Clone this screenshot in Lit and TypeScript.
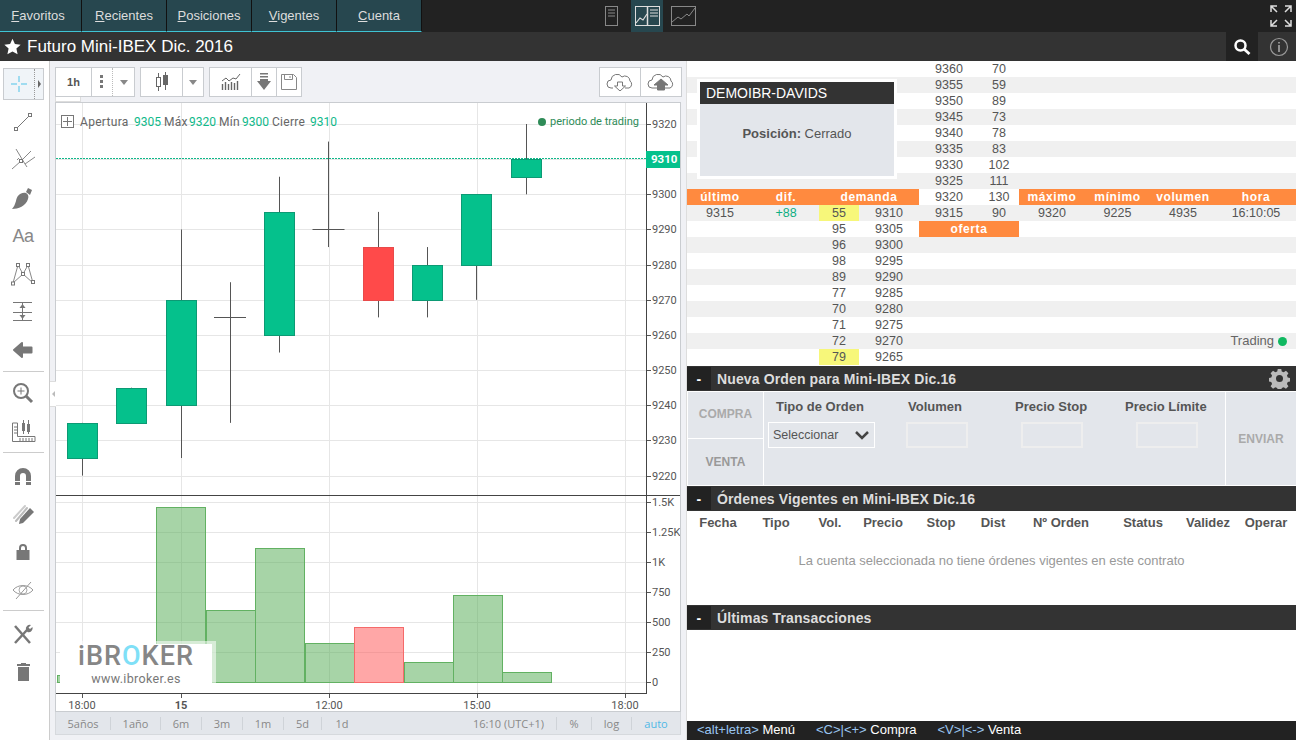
import { LitElement, html, css, svg } from "lit";
import { customElement } from "lit/decorators.js";

const Y = (p: number) => 124 + (9320 - p) * 3.516;
type C = [number, number, number, number, number];
const candles: C[] = [
  [82, 9235, 9225, 9235, 9220],
  [131.5, 9245, 9235, 9245, 9235],
  [181, 9270, 9240, 9290, 9225],
  [230, 9265, 9265, 9275, 9235],
  [279.5, 9295, 9260, 9305, 9255],
  [328.5, 9290, 9290, 9315, 9285],
  [378, 9285, 9270, 9295, 9265],
  [427.5, 9280, 9270, 9285, 9265],
  [476.5, 9300, 9280, 9300, 9270],
  [526, 9310, 9305, 9320, 9300],
];
const vols: [number, number, boolean][] = [
  [57, 675, false], [107, 660, false],
  [156, 507, false], [206, 610, false], [255, 548, false], [305, 643, false],
  [354, 627, true], [404, 662, false], [453, 595, false], [502, 672, false],
];
const priceTicks = [9320, 9310, 9300, 9290, 9280, 9270, 9260, 9250, 9240, 9230, 9220];
const volTicks: [string, number][] = [["1.5K", 502], ["1.25K", 532], ["1K", 562], ["750", 592], ["500", 622], ["250", 652], ["0", 682]];
const vgrid = [82, 181, 329, 477, 625];
const times: [string, number, boolean][] = [["18:00", 82, false], ["15", 181, true], ["12:00", 329, false], ["15:00", 477, false], ["18:00", 625, false]];

@customElement("chart-canvas")
class ChartCanvas extends LitElement {
  static styles = css`
    :host { display: block; width: 629px; height: 611px; }
    svg { display: block; }
    text { font-family: Roboto, "Liberation Sans", sans-serif; font-size: 12px; letter-spacing: .3px; fill: #555; }
    .lab { fill: #666; }
    .val { fill: #0fb98a; letter-spacing: 0; }
    .tr { fill: #2e8b57; font-size: 11px; letter-spacing: 0; }
    .ax { fill: #555; font-size: 11px; letter-spacing: 0; }
    .cur { fill: #fff; font-weight: 700; font-size: 11.5px; letter-spacing: 0; }
    .b { font-weight: 700; }
  `;
  render() {
    return html`<svg width="629" height="611" viewBox="55 102 629 611">
      <rect x="55" y="102" width="629" height="611" fill="#fff"/>
      ${svg`
      ${vgrid.map((x) => svg`<line x1=${x + .5} x2=${x + .5} y1="103" y2="693" stroke="#e6e6e6"/>`)}
      ${priceTicks.map((p) => svg`<line x1="56" x2="646" y1=${Math.round(Y(p)) + .5} y2=${Math.round(Y(p)) + .5} stroke="#e6e6e6"/>`)}
      ${volTicks.map(([, y]) => svg`<line x1="56" x2="646" y1=${y + .5} y2=${y + .5} stroke="#e6e6e6"/>`)}
      <line x1="56" x2="646" y1="158.5" y2="158.5" stroke="#0fb98a" stroke-dasharray="2 1"/>
      ${candles.map(([x, o, c, h, l]) => {
        const wick = svg`<line x1=${Math.floor(x) + .5} x2=${Math.floor(x) + .5} y1=${Y(h)} y2=${Y(l)} stroke="#555"/>`;
        if (o === c) return svg`${wick}<line x1=${x - 16} x2=${x + 16} y1=${Math.round(Y(o)) + .5} y2=${Math.round(Y(o)) + .5} stroke="#555"/>`;
        const red = x === 378;
        return svg`${wick}<rect x=${Math.floor(x) - 14.5} y=${Math.round(Y(o)) + .5} width="30" height=${Math.round(Y(c)) - Math.round(Y(o))} fill=${red ? "#ff4a4a" : "#05c18c"} stroke=${red ? "#e84a4a" : "#0c9a74"}/>`;
      })}
      ${vols.map(([x, top, red]) => svg`<rect x=${x + .5} y=${top + .5} width="49" height=${682 - top} fill=${red ? "rgba(255,80,80,.5)" : "rgba(80,170,80,.5)"} stroke=${red ? "#f56a6a" : "#62b162"}/>`)}
      <line x1="646.5" x2="646.5" y1="103" y2="693" stroke="#444"/>
      <line x1="55" x2="684" y1="495.5" y2="495.5" stroke="#444"/>
      <line x1="55" x2="647" y1="693.500" y2="693.500" stroke="#444"/>
      ${priceTicks.map((p) => svg`<line x1="647" x2="651" y1=${Math.round(Y(p)) + .5} y2=${Math.round(Y(p)) + .5} stroke="#555"/>
        <text class="ax" x="652" y=${Math.round(Y(p)) + 4}>${p}</text>`)}
      <rect x="646" y="151" width="35" height="17" fill="#05c18c"/>
      <text class="cur" x="651" y="163">9310</text>
      ${volTicks.map(([t, y]) => svg`<line x1="647" x2="651" y1=${y + .5} y2=${y + .5} stroke="#555"/>
        <text class="ax" x="652" y=${y + 4}>${t}</text>`)}
      ${times.map(([t, x, b]) => svg`<line x1=${x + .5} x2=${x + .5} y1="694" y2="698" stroke="#555"/>
        <text class=${b ? "ax b" : "ax"} x=${x} y="708.500" text-anchor="middle">${t}</text>`)}
      <rect x="61.500" y="115.500" width="12" height="12" fill="#fff" stroke="#777"/>
      <path d="M67.500 117v9M63 121.500h9" stroke="#777"/>
      <text class="lab" x="80" y="125.500">Apertura</text><text class="val" x="134" y="125.500">9305</text>
      <text class="lab" x="164" y="125.500">Máx</text><text class="val" x="189" y="125.500">9320</text>
      <text class="lab" x="219" y="125.500">Mín</text><text class="val" x="242" y="125.500">9300</text>
      <text class="lab" x="272" y="125.500">Cierre</text><text class="val" x="310" y="125.500">9310</text>
      <circle cx="542" cy="122" r="4" fill="#2e8b57"/>
      <text class="tr" x="550" y="125">periodo de trading</text>
      `}
    </svg>`;
  }
}

const ic = {
  cross: svg`<path d="M12 4v6M12 14v6M4 12h6M14 12h6" stroke="#4fc3e8" stroke-width="1" fill="none"/>`,
  line: svg`<path d="M6.500 17.500L17.500 6.500" stroke="#777" fill="none"/><rect x="3.500" y="17.500" width="3" height="3" fill="#fff" stroke="#777"/><rect x="17.500" y="3.500" width="3" height="3" fill="#fff" stroke="#777"/>`,
  pitch: svg`<path d="M1 21L10 13M5 1l9 15 10-7M10 13l10-10M14 16l2 3M8 10l-2 2" stroke="#888" fill="none"/><rect x="8.500" y="11.500" width="3" height="3" fill="#fff" stroke="#777"/>`,
  brush: svg`<path d="M1 23C7 23 15 20 17 13c1-3 0-5-2-6C9 6 6 10 5 15c-1 3-2 6-4 8zM15 6l2-4 4 2-2 5z" fill="#777"/>`,
  nodes: svg`<path d="M2 21L7 3l5 9 5-9 5 18M2 21l10-9 10 9" stroke="#888" fill="none"/><g fill="#fff" stroke="#777"><rect x=".5" y="20" width="3" height="3"/><rect x="5.500" y="1.500" width="3" height="3"/><rect x="10.500" y="10.500" width="3" height="3"/><rect x="15.500" y="1.500" width="3" height="3"/><rect x="20.500" y="18.500" width="3" height="3"/></g>`,
  measure: svg`<path d="M2 2.500h19M2 12.500h19M2 20.500h19" stroke="#777" fill="none"/><path d="M11.500 3v17" stroke="#777"/><path d="M11.500 4l-3 4h6zM11.500 19l-3-4h6z" fill="#777"/>`,
  back: svg`<path d="M3 12l8-7v4.500h9.500v5H11V19z" fill="#777" stroke="#777" stroke-width="2" stroke-linejoin="round"/>`,
  zoom: svg`<circle cx="10" cy="10" r="7" fill="none" stroke="#777" stroke-width="2"/><path d="M10 6.500v7M6.500 10h7" stroke="#777"/><path d="M15 15l6 6" stroke="#777" stroke-width="3"/>`,
  scale: svg`<path d="M.5 4v18.500h22.500v-5H5.500V4z" stroke="#777" fill="none"/><path d="M2 8h3M2 11h3M2 14h3M8 22v-3M11 22v-3M14 22v-3M17 22v-3M20 22v-3" stroke="#777"/><path d="M11.500 1v14M16.500 1v14" stroke="#777"/><rect x="10" y="4" width="3" height="8" fill="#777"/><rect x="15" y="5" width="3" height="8" fill="#777"/>`,
  magnet: svg`<path d="M4 21V12a8 8 0 0116 0v9h-5V12a3 3 0 00-6 0v9z" fill="#777"/><path d="M4 17.500h5M15 17.500h5" stroke="#fff" stroke-width="1"/>`,
  pencils: svg`<g fill="none" stroke-linecap="round"><path d="M3 16L14 4" stroke="#ccc" stroke-width="2"/><path d="M5 19L16 6" stroke="#bbb" stroke-width="2"/></g><path d="M8 22l1-5L19 6l4 4L12 21z" fill="#777"/>`,
  lock: svg`<path d="M8 11V8a4 4 0 018 0v3h-2V8a2 2 0 00-4 0v3z" fill="#777"/><path d="M5.500 10h13v10h-13z" fill="#777"/>`,
  eye: svg`<path d="M2 12c5-6 15-6 20 0-5 6-15 6-20 0z" fill="none" stroke="#999"/><path d="M8 12a4 4 0 018 0 4 4 0 01-8 0" fill="none" stroke="#aaa"/><path d="M5 21L20 4" stroke="#999"/>`,
  tools: svg`<path d="M4 4l15 17" stroke="#777" stroke-width="2.500"/><path d="M4 21L16 8" stroke="#777" stroke-width="2.500"/><path d="M15 8a4 4 0 015-5l-2.500 2.500 1.500 1.500L21.500 5a4 4 0 01-5 5z" fill="#777"/>`,
  trash: svg`<path d="M7 7h11v14H7zM6 4h13v2H6zM10 3h5v2h-5z" fill="#777"/>`,
};

@customElement("app-root")
class AppRoot extends LitElement {
  static styles = css`
    :host { display: block; width: 1296px; height: 740px; overflow: hidden; font-family: "Liberation Sans", Arial, sans-serif; background: #fff; color: #555; position: relative; }
    * { box-sizing: border-box; }
    .top { height: 32px; background: #222; display: flex; align-items: stretch; position: relative; }
    .tabs { display: flex; }
    .tab { width: 85px; border-right: 1px solid #111; border-bottom: 1px solid #3fc3d3; background: #27474f; color: #ddd; font-size: 13px; display: flex; align-items: center; justify-content: center; padding-bottom: 1px; }
    .tab:first-child { width: 82px; padding-right: 5px; }
    .views { position: absolute; left: 599px; top: 0; height: 32px; display: flex; }
    .view { width: 32px; height: 32px; display: flex; align-items: center; justify-content: center; }
    .view.first { justify-content: flex-start; padding-left: 6px; }
    .view.last { width: 40px; }
    .view.on { background: #27474f; }
    .fs { margin-left: auto; width: 30px; display: flex; align-items: center; justify-content: center; }
    .title { height: 29px; background: #333; display: flex; align-items: center; color: #fff; font-size: 17px; }
    .title .star { width: 27px; padding-left: 4px; display: flex; }
    .title .name { flex: 1; }
    .title .srch { width: 32px; height: 29px; background: #222; display: flex; align-items: center; justify-content: center; }
    .title .info { width: 38px; height: 29px; background: #333; display: flex; align-items: center; justify-content: center; padding-left: 4px; }
    .main { display: flex; height: 679px; }
    .tools { width: 50px; flex: none; background: #fff; border-right: 1px solid #ccc; padding: 7px 0 0 3px; display: flex; flex-direction: column; }
    .tool { width: 41px; height: 38px; flex: none; display: flex; align-items: center; justify-content: center; padding-right: 1px; }
    .tool.sel { height: 32px; margin-bottom: 3px; border: 1px solid #c9ccd0; background: #f0f4f8; justify-content: flex-start; padding-left: 3px; position: relative; }
    .tool .dots { position: absolute; right: 8px; top: 0; bottom: 0; border-left: 1px dotted #999; }
    .tool .arr { position: absolute; right: 2px; top: 11px; border-left: 3px solid #666; border-top: 4px solid transparent; border-bottom: 4px solid transparent; }
    .tool .aa { font-size: 18px; color: #888; letter-spacing: -.5px; }
    .tool .shifted { margin-left: 2px; }
    .sep { width: 41px; height: 1px; background: #ccc; margin: 2px 0 2px; flex: none; }
    .sep.b { margin: 2px 0 4px; }
    .sep.c { margin: 1px 0 4px; }
    .cp { width: 637px; flex: none; background: #f0f1f5; border-right: 1px solid #ddd; padding: 6px 5px 0 5px; display: flex; flex-direction: column; }
    .tb { height: 30px; display: flex; gap: 5px; }
    .group { display: flex; border: 1px solid #c9ccd0; background: #fff; height: 30px; }
    .group > div { display: flex; align-items: center; justify-content: center; height: 100%; border-right: 1px solid #c9ccd0; }
    .group > div:last-child { border-right: 0; }
    .group.cloud { margin-right: -1px; }
    .spacer { flex: 1; }
    .tf { width: 36px; font-size: 11px; font-weight: 700; color: #555; }
    .w21d { width: 21px; border-right: 1px dotted #bbb !important; }
    .w21 { width: 21px; }
    .w42 { width: 42px; }
    .w20 { width: 20px; }
    .w25 { width: 25px; }
    .w24 { width: 24px; }
    .w41 { width: 41px; }
    .w40 { width: 40px; }
    .tri { border-top: 5px solid #888; border-left: 4px solid transparent; border-right: 4px solid transparent; }
    .hide { height: 5px; }
    .hide div { width: 26px; height: 5px; background: #fff; border: 1px solid #ddd; border-top: 0; }
    .chart { height: 610px; border: 1px solid #c9ccd0; overflow: hidden; position: relative; width: 626px; }
    .chart chart-canvas { margin: -1px 0 0 -1px; }
    .logo { position: absolute; left: 4px; top: 538px; width: 156px; height: 52px; background: #fff; background-clip: padding-box; border: solid rgba(255,255,255,.55); border-width: 3px 4px 0 0; text-align: center; }
    .logo .big { font-family: Roboto, "Liberation Sans", sans-serif; font-size: 27px; font-weight: 500; color: #868686; letter-spacing: 1px; line-height: 25px; height: 25px; white-space: nowrap; }
    .logo .cy { color: #7fe0f7; }
    .logo .url { font-family: Roboto, "Liberation Sans", sans-serif; font-size: 12.5px; color: #777; line-height: 14px; height: 14px; margin-top: 3px; letter-spacing: .35px; }
    .range { height: 23px; background: #e3e6eb; width: 626px; display: flex; align-items: center; font-family: "Open Sans", "Liberation Sans", sans-serif; font-size: 11px; color: #888; border: 1px solid #d6d9dd; border-top: 0; }
    .range span { display: flex; align-items: center; justify-content: center; height: 13px; border-right: 1px solid #cfd3d8; flex: none; }
    .range .r { margin-left: auto; justify-content: flex-end; padding-right: 12px; }
    .range .end { border: 0; }
    .range .auto { color: #4fb8e6; }
    .rw55 { width: 55px; } .rw50 { width: 50px; } .rw41 { width: 41px; } .rw38 { width: 38px; }
    .rw40 { width: 40px; } .rw130 { width: 130px; } .rw35 { width: 35px; } .rw48 { width: 48px; }
    .range .nb { border: 0; }
    .handle { position: absolute; left: 50px; top: 381px; width: 6px; height: 26px; background: #fff; border: solid #ddd; border-width: 1px 0; display: flex; align-items: center; justify-content: center; }
    .handle i { border-right: 3px solid #bbb; border-top: 3px solid transparent; border-bottom: 3px solid transparent; }
    .right { flex: 1; position: relative; font-size: 12.5px; color: #555; min-width: 0; }
    .book { display: grid; grid-template-columns: 66px 66px 40px 60px 60px 40px 66px 65px 66px 80px; grid-auto-rows: 16px; height: 304px; }
    .c { display: flex; align-items: center; justify-content: center; white-space: nowrap; }
    .g { background: #f0f0f0; }
    .o { background: #ff8a3f; color: #fff; font-weight: 700; letter-spacing: .6px; font-size: 12px; }
    .y { background: #f7f77a; }
    .s2 { grid-column: span 2; }
    .plus { color: #0fae82; }
    .pos { position: absolute; left: 10px; top: 18px; width: 200px; height: 100px; border: 3px solid #fff; background: #e3e6eb; }
    .pos .h { height: 22px; background: #333; color: #fff; font-size: 14px; padding-left: 6px; line-height: 22px; }
    .pos .b { height: 72px; display: flex; align-items: center; justify-content: center; font-size: 13px; padding-bottom: 14px; }
    .trading { position: absolute; right: 9px; top: 272px; font-size: 13px; display: flex; align-items: center; gap: 4px; color: #666; line-height: 16px; }
    .trading i { width: 9px; height: 9px; background: #10b860; border-radius: 50%; }
    .sh { height: 25px; background: #333; color: #ddd; font-size: 14px; font-weight: 700; display: flex; align-items: center; position: relative; letter-spacing: .13px; }
    .sh.first { margin-top: 1px; }
    .sh .m { width: 24px; height: 23px; background: #222; color: #fff; display: flex; align-items: center; justify-content: center; margin-right: 6px; }
    .sh .gear { position: absolute; right: 6px; top: 2px; display: flex; }
    .form { height: 95px; background: #e3e6eb; display: flex; border-top: 1px solid #fff; border-bottom: 1px solid #fff; }
    .side { width: 77px; display: flex; flex-direction: column; border-right: 1px solid #fff; border-left: 1px solid #fff; flex: none; font-weight: 700; font-size: 12px; color: #999; }
    .side div { display: flex; align-items: center; justify-content: center; }
    .side div:first-child { height: 47px; border-bottom: 1px solid #fff; color: #aaa; padding-bottom: 2px; }
    .side div:last-child { flex: 1; }
    .fields { flex: 1; display: grid; grid-template-columns: 130px 113px 110px 104px; padding: 7px 0 0 4px; min-width: 0; }
    .field { display: flex; flex-direction: column; align-items: flex-start; gap: 8px; font-weight: 700; font-size: 13px; color: #555; white-space: nowrap; }
    .pl8 { padding-left: 8px; } .pl10 { padding-left: 10px; } .pl4 { padding-left: 4px; }
    .ml8 { margin-left: 8px; } .ml10 { margin-left: 10px; } .ml15 { margin-left: 15px; }
    .send { width: 71px; flex: none; border-left: 1px solid #fff; display: flex; align-items: center; justify-content: center; font-weight: 700; font-size: 12px; color: #aaa; padding-top: 1px; }
    .sel2 { width: 107px; height: 26px; border: 1px solid #fff; font-size: 12.5px; font-weight: 400; display: flex; align-items: center; justify-content: space-between; padding: 0 5px 0 4px; color: #555; }
    .inp { width: 62px; height: 26px; border: 2px solid #eee; }
    .thead { display: flex; height: 22px; font-size: 13px; font-weight: 700; color: #555; align-items: center; }
    .msg { height: 72px; display: flex; align-items: center; justify-content: center; color: #999; font-size: 13px; padding-bottom: 18px; }
    .trans { height: 91px; }
    .foot { height: 19px; background: #222; color: #fff; font-size: 13px; display: flex; align-items: center; padding: 0 0 2px 10px; gap: 21px; }
    .foot em { font-style: normal; color: #9ac6f0; }
  `;

  book() {
    const top: [number, number][] = [[9360, 70], [9355, 59], [9350, 89], [9345, 73], [9340, 78], [9335, 83], [9330, 102], [9325, 111]];
    const low: [number, number][] = [[96, 9300], [98, 9295], [89, 9290], [77, 9285], [70, 9280], [71, 9275], [72, 9270], [79, 9265]];
    const e = (cls = "", t: any = "", span = 0) => html`<div class="c ${cls} ${span ? `s${span}` : ""}">${t}</div>`;
    const rows: any[] = [];
    top.forEach(([p, v], i) => {
      const g = i % 2 ? "g" : "";
      rows.push(e(g), e(g), e(g), e(g), e(g, p), e(g, v), e(g), e(g), e(g), e(g));
    });
    rows.push(e("o", "último"), e("o", "dif."), e("o", "demanda", 2), e("", 9320), e("", 130), e("o", "máximo"), e("o", "mínimo"), e("o", "volumen"), e("o", "hora"));
    rows.push(e("g", 9315), e("g plus", "+88"), e("y", 55), e("g", 9310), e("g", 9315), e("g", 90), e("g", 9320), e("g", 9225), e("g", 4935), e("g", "16:10:05"));
    rows.push(e(), e(), e("", 95), e("", 9305), e("o", "oferta", 2), e(), e(), e(), e());
    low.forEach(([v, p], i) => {
      const g = i % 2 === 0 ? "g" : "";
      const yc = v === 79 ? "y" : g;
      rows.push(e(g), e(g), e(yc, v), e(g, p), e(g), e(g), e(g), e(g), e(g), e(g));
    });
    return rows;
  }

  tool(i: any, cls = "") {
    return html`<div class="tool"><svg class=${cls} width="24" height="24" viewBox="0 0 24 24">${i}</svg></div>`;
  }

  render() {
    const heads: [string, number][] = [["Fecha", 62], ["Tipo", 54], ["Vol.", 54], ["Precio", 52], ["Stop", 64], ["Dist", 40], ["Nº Orden", 96], ["Status", 68], ["Validez", 62], ["Operar", 54]];
    return html`
      <div class="top">
        <div class="tabs">
          <div class="tab"><span><u>F</u>avoritos</span></div>
          <div class="tab"><span><u>R</u>ecientes</span></div>
          <div class="tab"><span><u>P</u>osiciones</span></div>
          <div class="tab"><span><u>V</u>igentes</span></div>
          <div class="tab"><span><u>C</u>uenta</span></div>
        </div>
        <div class="views">
          <div class="view first"><svg width="13" height="20" viewBox="0 0 13 20"><rect x=".5" y=".5" width="12" height="19" fill="none" stroke="#888"/><path d="M3 4h7M3 7h7M3 10h7" stroke="#888"/></svg></div>
          <div class="view on"><svg width="25" height="20" viewBox="0 0 25 20"><rect x=".5" y=".5" width="24" height="19" fill="none" stroke="#ddd"/><path d="M12.500 1v19" stroke="#ddd" stroke-width="1.500"/><path d="M15 4h8M15 7h8M15 10h8" stroke="#ddd"/><path d="M1 17l4-5 3 2 4-6" stroke="#ddd" fill="none" stroke-width="1.200"/></svg></div>
          <div class="view last"><svg width="25" height="20" viewBox="0 0 25 20"><rect x=".5" y=".5" width="24" height="19" fill="none" stroke="#888"/><path d="M1 16l6-5 3 2 6-5 2 2 6-8" stroke="#888" fill="none"/></svg></div>
        </div>
        <div class="fs"><svg width="22" height="22" viewBox="0 0 22 22" fill="none" stroke="#ddd" stroke-width="1.500"><path d="M1 7V1h6M1 1l6 6M15 1h6v6M21 1l-6 6M1 15v6h6M1 21l6-6M15 21h6v-6M21 21l-6-6"/></svg></div>
      </div>
      <div class="title">
        <div class="star"><svg width="17" height="17" viewBox="0 0 24 24"><path d="M12 1l3.400 7.500 8.100.9-6 5.500 1.700 8.100-7.200-4.100-7.200 4.100 1.700-8.100-6-5.500 8.100-.9z" fill="#fff"/></svg></div>
        <div class="name">Futuro Mini-IBEX Dic. 2016</div>
        <div class="srch"><svg width="18" height="18" viewBox="0 0 18 18" fill="none" stroke="#fff"><circle cx="7.500" cy="7.500" r="5" stroke-width="2.500"/><path d="M11 11l5.500 5" stroke-width="2.800"/></svg></div>
        <div class="info"><svg width="20" height="20" viewBox="0 0 20 20" fill="none" stroke="#999"><circle cx="10" cy="10" r="8.500" stroke-width="1.200"/><path d="M10 5v1.500M10 8v7" stroke-width="1.800"/></svg></div>
      </div>
      <div class="main">
        <div class="tools">
          <div class="tool sel"><svg width="24" height="24" viewBox="0 0 24 24">${ic.cross}</svg><span class="dots"></span><span class="arr"></span></div>
          ${[ic.line, ic.pitch, ic.brush].map((i) => this.tool(i))}
          <div class="tool"><span class="aa">Aa</span></div>
          ${[ic.nodes, ic.measure, ic.back].map((i) => this.tool(i))}
          <div class="sep"></div>
          ${this.tool(ic.zoom)}
          ${this.tool(ic.scale, "shifted")}
          <div class="sep b"></div>
          ${[ic.magnet, ic.pencils, ic.lock, ic.eye].map((i) => this.tool(i))}
          <div class="sep c"></div>
          ${[ic.tools, ic.trash].map((i) => this.tool(i))}
        </div>
        <div class="cp">
          <div class="tb">
            <div class="group">
              <div class="tf">1h</div>
              <div class="w21d"><svg width="4" height="14" viewBox="0 0 4 14" fill="#777"><rect x="0" width="3" height="3"/><rect y="5" width="3" height="3"/><rect y="10" width="3" height="3"/></svg></div>
              <div class="w21"><span class="tri"></span></div>
            </div>
            <div class="group">
              <div class="w42"><svg width="14" height="20" viewBox="0 0 14 20" fill="none" stroke="#666"><path d="M3.500 1v18M10.500 0v18"/><rect x="1.500" y="5.500" width="4" height="9" fill="#fff"/><rect x="8.500" y="3.500" width="4" height="9" fill="#666"/></svg></div>
              <div class="w20"><span class="tri"></span></div>
            </div>
            <div class="group">
              <div class="w42"><svg width="20" height="16" viewBox="0 0 20 16" fill="none" stroke="#666"><path d="M1 7l4-3 3 3 4-3 3 1 4-5"/><path d="M1.500 10v6M4.500 8v8M7.500 10v6M10.500 8v8M13.500 9v7M16.500 7v9" stroke-width="1.400"/></svg></div>
              <div class="w25"><svg width="14" height="18" viewBox="0 0 14 18" fill="#777"><path d="M3 0h8v1.500H3zM3 3h8v1.500H3zM3 6h8v2h3l-7 9-7-9h3z"/></svg></div>
              <div class="w24"><svg width="16" height="16" viewBox="0 0 16 16" fill="none" stroke="#888"><path d="M.5.5h12l3 3v12H.5z"/><path d="M3.500.5v5h8v-5M9 2v2"/></svg></div>
            </div>
            <div class="spacer"></div>
            <div class="group cloud">
              <div class="w41"><svg width="28" height="18" viewBox="0 0 28 18" fill="none" stroke="#777"><path d="M7 15H5a4 4 0 010-8 6 6 0 0111-3 5 5 0 018 4 4 4 0 01-1 7h-4"/><path d="M11.500 9h5v4h3l-5.500 5-5.500-5h3z" fill="#fff"/></svg></div>
              <div class="w40"><svg width="28" height="18" viewBox="0 0 28 18" fill="none" stroke="#777"><path d="M5 15a4 4 0 010-8 6 6 0 0111-3 5 5 0 018 4 4 4 0 01-1 7z"/><path d="M10.500 17v-5h-3.500l7-6 7 6h-3.500v5z" fill="#777"/></svg></div>
            </div>
          </div>
          <div class="hide"><div></div></div>
          <div class="chart">
            <chart-canvas></chart-canvas>
            <div class="logo"><div class="big">iBR<span class="cy">O</span>KER</div><div class="url">www.ibroker.es</div></div>
          </div>
          <div class="range">
            <span class="rw55">5años</span><span class="rw50">1año</span><span class="rw41">6m</span><span class="rw41">3m</span><span class="rw41">1m</span><span class="rw38">5d</span><span class="rw40 nb">1d</span>
            <span class="r rw130">16:10 (UTC+1)</span><span class="rw35">%</span><span class="rw40">log</span><span class="end auto rw48">auto</span>
          </div>
        </div>
        <div class="right">
          <div class="book">${this.book()}</div>
          <div class="pos"><div class="h">DEMOIBR-DAVIDS</div><div class="b"><b>Posición:</b>&nbsp;Cerrado</div></div>
          <div class="trading">Trading <i></i></div>
          <div class="sh first"><div class="m">-</div>Nueva Orden para Mini-IBEX Dic.16
            <span class="gear"><svg width="21" height="21" viewBox="0 0 24 24"><path fill="#bbb" fill-rule="evenodd" d="M10 1h4l.6 3 2.200.9 2.600-1.700 2.800 2.800-1.700 2.600.9 2.200 3 .6v4l-3 .6-.9 2.200 1.700 2.600-2.800 2.800-2.600-1.700-2.200.9-.6 3h-4l-.6-3-2.200-.9-2.600 1.700-2.800-2.800 1.700-2.600-.9-2.200-3-.6v-4l3-.6.9-2.200L1.800 6l2.800-2.800 2.600 1.700 2.200-.9zM12 8a4 4 0 100 8 4 4 0 000-8z"/></svg></span>
          </div>
          <div class="form">
            <div class="side"><div>COMPRA</div><div>VENTA</div></div>
            <div class="fields">
              <div class="field"><span class="pl8">Tipo de Orden</span><div class="sel2">Seleccionar<svg width="14" height="9" viewBox="0 0 14 9" fill="none" stroke="#444" stroke-width="2.500"><path d="M1 1l6 6 6-6"/></svg></div></div>
              <div class="field"><span class="pl10">Volumen</span><div class="inp ml8"></div></div>
              <div class="field"><span class="pl4">Precio Stop</span><div class="inp ml10"></div></div>
              <div class="field"><span class="pl4">Precio Límite</span><div class="inp ml15"></div></div>
            </div>
            <div class="send">ENVIAR</div>
          </div>
          <div class="sh"><div class="m">-</div>Órdenes Vigentes en Mini-IBEX Dic.16</div>
          <div class="thead">${heads.map(([t, w]) => html`<div class="c" style="width:${w}px">${t}</div>`)}</div>
          <div class="msg">La cuenta seleccionada no tiene órdenes vigentes en este contrato</div>
          <div class="sh"><div class="m">-</div>Últimas Transacciones</div>
          <div class="trans"></div>
          <div class="foot"><span><em>&lt;alt+letra&gt;</em> Menú</span><span><em>&lt;C&gt;|&lt;+&gt;</em> Compra</span><span><em>&lt;V&gt;|&lt;-&gt;</em> Venta</span></div>
        </div>
      </div>
      <div class="handle"><i></i></div>
    `;
  }
}
